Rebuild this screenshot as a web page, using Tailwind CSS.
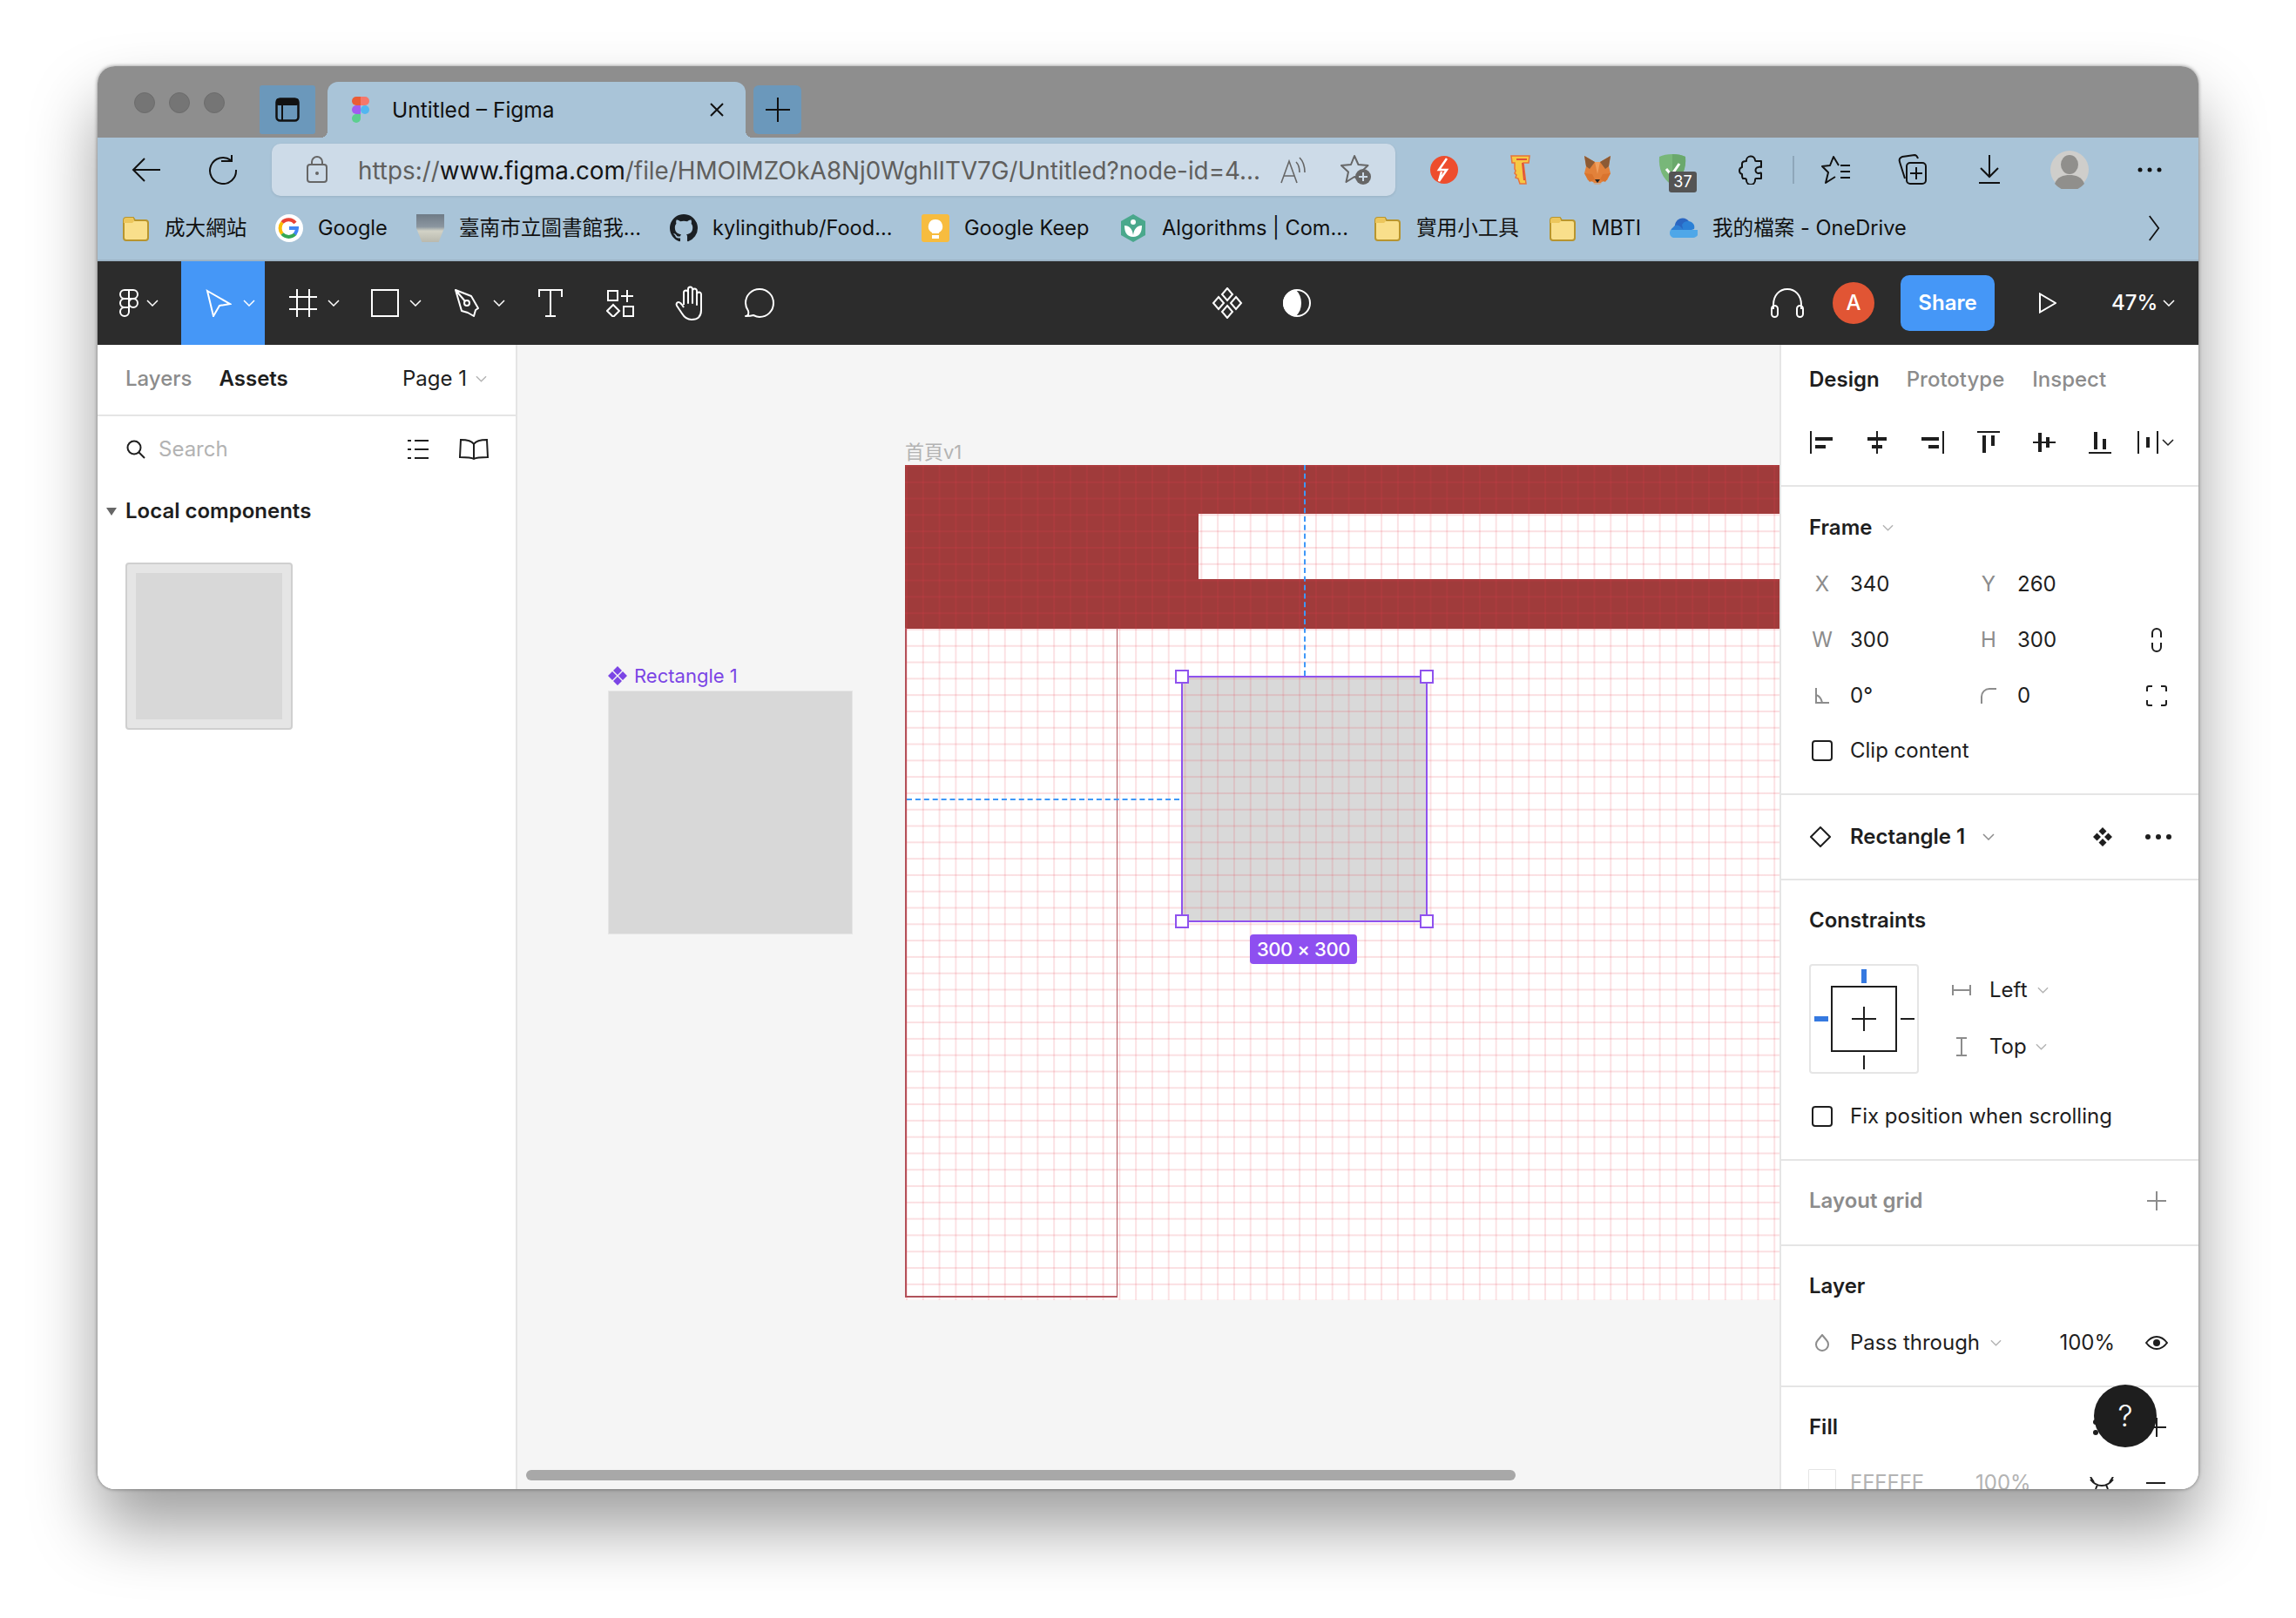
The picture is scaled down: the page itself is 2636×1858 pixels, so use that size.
<!doctype html>
<html><head><meta charset="utf-8">
<script src="https://cdn.jsdelivr.net/npm/@tailwindcss/browser@4"></script>
</head>
<body class="m-0 bg-white">
<div class="w-[2636px] h-[1858px] pt-[76px] pl-[112px] bg-white overflow-hidden font-['Inter','Noto_Sans_CJK_TC',sans-serif] text-[#1e1e1e] antialiased">
<div class="w-[2412px] h-[1634px] flex flex-col rounded-[20px] overflow-hidden shadow-[0_44px_76px_rgba(0,0,0,0.38),0_0_4px_rgba(0,0,0,0.45)]">

<!-- title bar -->
<div class="h-[82px] shrink-0 bg-[#8e8e8e] flex items-start">
  <div class="flex gap-[16px] mt-[30px] ml-[42px]">
    <div class="w-[24px] h-[24px] rounded-full bg-[#757575] border border-[#6c6c6c]"></div>
    <div class="w-[24px] h-[24px] rounded-full bg-[#757575] border border-[#6c6c6c]"></div>
    <div class="w-[24px] h-[24px] rounded-full bg-[#757575] border border-[#6c6c6c]"></div>
  </div>
  <div class="ml-[40px] mt-[22px] w-[64px] h-[56px] bg-[#6b98bb] rounded-[3px] flex items-center justify-center">
    <svg width="30" height="30" viewBox="0 0 30 30" fill="none"><rect x="2.5" y="2.5" width="25" height="25" rx="4" stroke="#111" stroke-width="2.5"/><rect x="2" y="2" width="26" height="8" rx="3" fill="#111"/><path d="M9 9v18" stroke="#111" stroke-width="2"/></svg>
  </div>
  <div class="relative ml-[14px] mt-[18px] w-[480px] h-[64px] bg-[#a9c4d8] rounded-t-[12px] flex items-center pl-[28px] pr-[25px]">
    <span class="absolute left-[-8px] bottom-0 w-[8px] h-[8px] bg-[radial-gradient(circle_at_0_0,transparent_8px,#a9c4d8_8px)]"></span>
    <span class="absolute right-[-8px] bottom-0 w-[8px] h-[8px] bg-[radial-gradient(circle_at_100%_0,transparent_8px,#a9c4d8_8px)]"></span>
    <svg width="20" height="30" viewBox="0 0 20 30"><path d="M10 0H5a5 5 0 0 0 0 10h5z" fill="#ea5c35"/><path d="M10 0h5a5 5 0 0 1 0 10h-5z" fill="#f5776a"/><path d="M10 10H5a5 5 0 0 0 0 10h5z" fill="#a25cf0"/><circle cx="15" cy="15" r="5" fill="#52b6f0"/><path d="M5 20h5v5a5 5 0 1 1-5-5z" fill="#5ccf8f"/></svg>
    <span class="ml-[26px] text-[24.500px] leading-none whitespace-nowrap text-[#111]">Untitled – Figma</span>
    <svg class="ml-auto" width="16" height="16" viewBox="0 0 16 16" fill="none"><path d="M1 1l14 14M15 1 1 15" stroke="#111" stroke-width="2"/></svg>
  </div>
  <div class="ml-[9px] mt-[22px] w-[55px] h-[56px] bg-[#6b98bb] rounded-[6px] flex items-center justify-center">
    <svg width="28" height="28" viewBox="0 0 28 28" fill="none"><path d="M14 0v28M0 14h28" stroke="#111" stroke-width="2"/></svg>
  </div>
</div>

<!-- browser toolbar + bookmarks -->
<div class="h-[142px] shrink-0 bg-[#a9c4d8] border-b-2 border-[#9cb3c5]">
  <div class="h-[74px] flex items-center">
    <div class="ml-[24px] w-[64px] flex justify-center">
      <svg width="34" height="30" viewBox="0 0 34 30" fill="none"><path d="M33 15H2M15 2 2 15l13 13" stroke="#111" stroke-width="2"/></svg>
    </div>
    <div class="ml-[24px] w-[64px] flex justify-center">
      <svg width="34" height="34" viewBox="0 0 34 34" fill="none"><path d="M26 6A15 15 0 1 0 32 17" stroke="#111" stroke-width="2"/><path d="M15 4h12V-3" transform="translate(0 3)" stroke="#111" stroke-width="2"/></svg>
    </div>
    <div class="ml-[24px] w-[1290px] h-[60px] bg-[#cddbe8] rounded-[10px] flex items-center pl-[36px] shadow-[0_1px_3px_rgba(0,0,0,0.1)]">
      <div class="w-[32px] flex justify-center">
        <svg width="26" height="32" viewBox="0 0 26 32" fill="none"><rect x="2" y="10" width="22" height="20" rx="3" stroke="#666" stroke-width="2"/><path d="M7 10V7a6 6 0 0 1 12 0v3" stroke="#666" stroke-width="2"/><circle cx="13" cy="20" r="2" fill="#666"/></svg>
      </div>
      <div class="ml-[31px] w-[1034px] pt-[2px] text-[27.800px] leading-[36px] whitespace-nowrap text-[#605f5d]">https://<span class="text-[#141414]">www.figma.com</span>/file/HMOlMZOkA8Nj0WghlITV7G/Untitled?node-id=4...</div>
      <div class="ml-[20px] w-[40px] flex justify-center">
        <svg width="32" height="32" viewBox="0 0 32 32" fill="none"><path d="M2 31 11 6l9 25M5 23h12" stroke="#666" stroke-width="1.6"/><path d="M19 7c3 3 4 7 4 12M23 2c4 4 6 10 6 17" stroke="#666" stroke-width="1.6"/></svg>
      </div>
      <div class="ml-[32px] w-[40px] flex justify-center">
        <svg width="36" height="36" viewBox="0 0 36 36" fill="none"><path d="M16 2l4.500 10 11 1-8 7.500 2.500 11L16 26l-9.500 6L9 20.500 1 13l11-1z" stroke="#666" stroke-width="2" stroke-linejoin="round"/><circle cx="26" cy="26" r="9" fill="#666"/><path d="M26 21v10M21 26h10" stroke="#cddbe8" stroke-width="2"/></svg>
      </div>
    </div>
    <div class="ml-[12px] w-[88px] flex justify-center">
      <svg width="32" height="32" viewBox="0 0 32 32"><ellipse cx="16" cy="16" rx="16" ry="16" fill="#ee4d2d"/><path d="M19 3 10 16h9l-9 13 3-11" fill="none" stroke="#fff" stroke-width="2.500"/></svg>
    </div>
    <div class="w-[88px] flex justify-center">
      <svg width="24" height="34" viewBox="0 0 24 34"><path d="M1 1h21l-1 8h-6l3 24h-7l-2-6-3-1 1-3-2-2 1-3-1-2V9H2z" fill="#f6c944" stroke="#e8733a" stroke-width="1.500"/><path d="M7 5h12M14 9l2 20" stroke="#e0503a" stroke-width="2" fill="none"/></svg>
    </div>
    <div class="w-[88px] flex justify-center">
      <svg width="32" height="34" viewBox="0 0 32 34"><path d="M1 1 13 8h6L31 1l-2 12 2 8-4 8-6 2-2 2h-6l-2-2-6-2-4-8 2-8z" fill="#e2813a"/><path d="M1 1l12 7-6 8-4-3zM31 1 19 8l6 8 4-3z" fill="#8c5a34"/><path d="M13 8h6l-3 14z" fill="#f0a060"/><path d="M1 21l9 1 3 6-6 3zM31 21l-9 1-3 6 6 3z" fill="#d9742e"/><path d="M13 28h6l-3 4z" fill="#222"/><path d="M11 32h10l-2 2h-6z" fill="#c0ad9e"/></svg>
    </div>
    <div class="w-[88px] flex justify-center">
      <div class="relative w-[36px] h-[36px]">
        <svg width="32" height="36" viewBox="0 0 32 36"><path d="M16 0c6 0 11 1 15 3 1 13-3 25-15 33C4 28 0 16 1 3 5 1 10 0 16 0z" fill="#78b779"/><path d="M16 0c6 0 11 1 15 3 1 13-3 25-15 33z" fill="#6aa86c"/><path d="M9 17l6 7 9-13" fill="none" stroke="#fff" stroke-width="3"/></svg>
        <span class="absolute left-[12px] top-[20px] w-[32px] h-[24px] bg-[#545454] rounded-[3px] text-white text-[18px] leading-[24px] text-center">37</span>
      </div>
    </div>
    <div class="w-[88px] flex justify-center">
      <svg width="30" height="34" viewBox="0 0 30 34" fill="none"><path d="M10 7a5 5 0 0 1 10-1c0 1 0 1 1 1h6v7c-1 0-2-1-3 0a3.500 3.500 0 0 0 0 7c1 0 3-1 3 0v6h-6c-1 0-1 1-1 2a5 5 0 0 1-10 0c0-1-1-2-2-2H6c-1-1-1-3-1-5-4-1-4-7 0-8V10c0-2 2-3 5-3z" stroke="#111" stroke-width="2" stroke-linejoin="round"/></svg>
    </div>
    <div class="ml-[4px] w-[2px] h-[32px] bg-[#8ea7ba]"></div>
    <div class="ml-[4px] w-[88px] flex justify-center">
      <svg width="34" height="32" viewBox="0 0 34 32" fill="none"><path d="M20 11 14 1 10 11 1 12l7 7-3 12 11-7M22 11h11M22 18h11M22 25h11" stroke="#111" stroke-width="2" stroke-linejoin="round"/></svg>
    </div>
    <div class="w-[88px] flex justify-center">
      <svg width="34" height="36" viewBox="0 0 34 36" fill="none"><path d="M8 28 2 9c-1-3 0-5 3-6l14-2c2 0 3 1 4 4" stroke="#111" stroke-width="2"/><rect x="10" y="10" width="22" height="24" rx="4" stroke="#111" stroke-width="2"/><path d="M21 15v14M14 22h14" stroke="#111" stroke-width="2"/></svg>
    </div>
    <div class="w-[88px] flex justify-center">
      <svg width="24" height="34" viewBox="0 0 24 34" fill="none"><path d="M12 0v25M2 15l10 10 10-10M0 32h24" stroke="#111" stroke-width="2"/></svg>
    </div>
    <div class="w-[96px] flex justify-center">
      <svg width="44" height="44" viewBox="0 0 44 44"><circle cx="22" cy="22" r="22" fill="#cfcecb"/><ellipse cx="22" cy="16" rx="10" ry="11" fill="#908f8c"/><path d="M5 38c3-8 10-10 17-10s14 2 17 10a22 22 0 0 1-34 0z" fill="#908f8c"/></svg>
    </div>
    <div class="w-[88px] flex justify-center">
      <svg width="28" height="6" viewBox="0 0 28 6"><circle cx="3" cy="3" r="2.500" fill="#111"/><circle cx="14" cy="3" r="2.500" fill="#111"/><circle cx="25" cy="3" r="2.500" fill="#111"/></svg>
    </div>
  </div>
  <div class="h-[60px] flex items-center pl-[28px] gap-[33px] text-[23.600px] leading-none text-[#111] whitespace-nowrap">
    <div class="flex items-center gap-[17px]">
      <svg width="32" height="30" viewBox="0 0 32 30"><path d="M2 6a3 3 0 0 1 3-3h8l2 3h12a3 3 0 0 1 3 3v17a3 3 0 0 1-3 3H5a3 3 0 0 1-3-3z" fill="#f9df8b" stroke="#b8952e" stroke-width="2"/><path d="M2 9V6a3 3 0 0 1 3-3h8l1 4-2 2z" fill="#ecc65c"/></svg>
      <span class="w-[94px]">成大網站</span>
    </div>
    <div class="flex items-center gap-[17px]">
      <svg width="32" height="32" viewBox="0 0 32 32" fill="none"><circle cx="16" cy="16" r="16" fill="#fff"/><path d="M23 10a10 10 0 0 0-15-.5" stroke="#ea4335" stroke-width="4"/><path d="M8 9.500a10 10 0 0 0 0 13" stroke="#fbbc05" stroke-width="4"/><path d="M8 22.500a10 10 0 0 0 15 0" stroke="#34a853" stroke-width="4"/><path d="M16 16h9c0 3-1 5-2.500 7" stroke="#4285f4" stroke-width="4"/></svg>
      <span class="w-[80px]">Google</span>
    </div>
    <div class="flex items-center gap-[17px]">
      <div class="w-[32px] h-[32px] bg-[linear-gradient(to_bottom,#6f7b86_0%,#8b96a0_45%,#d2d2c6_60%,#b9b9ae_100%)] [clip-path:polygon(0_0,100%_0,100%_50%,80%_100%,20%_100%,0_50%)]"></div>
      <span class="w-[209px]">臺南市立圖書館我...</span>
    </div>
    <div class="flex items-center gap-[17px]">
      <svg width="32" height="32" viewBox="0 0 16 16"><path fill="#1b1f23" d="M8 0C3.580 0 0 3.580 0 8c0 3.540 2.290 6.530 5.470 7.590.4.070.55-.17.55-.38 0-.19-.01-.82-.01-1.490-2.010.37-2.530-.49-2.690-.94-.09-.23-.48-.94-.82-1.130-.28-.15-.68-.52-.01-.53.63-.01 1.080.58 1.230.82.720 1.210 1.870.87 2.330.66.070-.52.280-.87.510-1.070-1.780-.2-3.640-.89-3.640-3.950 0-.87.310-1.590.820-2.150-.08-.2-.36-1.020.080-2.120 0 0 .67-.21 2.200.82.640-.18 1.320-.27 2-.27s1.360.09 2 .27c1.530-1.040 2.200-.82 2.200-.82.440 1.100.160 1.920.080 2.120.51.560.82 1.270.82 2.150 0 3.070-1.870 3.750-3.650 3.950.29.25.54.73.54 1.480 0 1.070-.01 1.930-.01 2.200 0 .21.150.46.550.38A8.010 8.010 0 0 0 16 8c0-4.420-3.580-8-8-8z"/></svg>
      <span class="w-[207px]">kylingithub/Food...</span>
    </div>
    <div class="flex items-center gap-[17px]">
      <svg width="32" height="32" viewBox="0 0 32 32"><rect width="32" height="32" rx="3" fill="#f7bc3f"/><path d="M16 6a8 8 0 0 1 4 15v1h-8v-1A8 8 0 0 1 16 6z" fill="#fff"/><rect x="12" y="24" width="8" height="4" fill="#fff"/></svg>
      <span class="w-[145px]">Google Keep</span>
    </div>
    <div class="flex items-center gap-[17px]">
      <svg width="32" height="32" viewBox="0 0 32 32"><path d="M16 0 30 8v16l-14 8-14-8V8z" fill="#4aa88c"/><circle cx="16" cy="9" r="3" fill="#fff"/><path d="M6 13c6 0 9 4 10 11 1-7 4-11 10-11 0 8-3 13-10 13S6 21 6 13z" fill="#fff"/></svg>
      <span class="w-[210px]">Algorithms | Com...</span>
    </div>
    <div class="flex items-center gap-[17px]">
      <svg width="32" height="30" viewBox="0 0 32 30"><path d="M2 6a3 3 0 0 1 3-3h8l2 3h12a3 3 0 0 1 3 3v17a3 3 0 0 1-3 3H5a3 3 0 0 1-3-3z" fill="#f9df8b" stroke="#b8952e" stroke-width="2"/><path d="M2 9V6a3 3 0 0 1 3-3h8l1 4-2 2z" fill="#ecc65c"/></svg>
      <span class="w-[119px]">實用小工具</span>
    </div>
    <div class="flex items-center gap-[17px]">
      <svg width="32" height="30" viewBox="0 0 32 30"><path d="M2 6a3 3 0 0 1 3-3h8l2 3h12a3 3 0 0 1 3 3v17a3 3 0 0 1-3 3H5a3 3 0 0 1-3-3z" fill="#f9df8b" stroke="#b8952e" stroke-width="2"/><path d="M2 9V6a3 3 0 0 1 3-3h8l1 4-2 2z" fill="#ecc65c"/></svg>
      <span class="w-[57px]">MBTI</span>
    </div>
    <div class="flex items-center gap-[17px]">
      <svg width="32" height="32" viewBox="0 0 32 32"><path d="M6 15a9 9 0 0 1 16-7l-6 11z" fill="#2a66c2"/><path d="M14 12a8 8 0 0 1 8-4 7 7 0 0 1 6 9l-12 4z" fill="#2b80d6"/><path d="M4 15a5 5 0 0 1 8-1l12 12H6a6 6 0 0 1-2-11z" fill="#2f7fd3"/><path d="M4 27a6 6 0 0 1-4-6 6 6 0 0 1 1-3l15 0 16 0a6 6 0 0 1-5 9z" fill="#4fa7e8"/></svg>
      <span class="w-[225px]">我的檔案 - OneDrive</span>
    </div>
    <svg class="ml-[242px]" width="14" height="30" viewBox="0 0 16 34" fill="none"><path d="M2 1l12 16L2 33" stroke="#111" stroke-width="2"/></svg>
  </div>
</div>

<!-- figma toolbar -->
<div class="h-[96px] shrink-0 bg-[#2c2c2c] flex items-center text-white">
  <div class="w-[96px] h-full flex items-center pl-[24px]">
    <svg width="24" height="32" viewBox="0 0 24 32" fill="none" stroke="#fff" stroke-width="2"><path d="M12 1H7a5 5 0 0 0 0 10h5zM12 1h5a5 5 0 0 1 0 10h-5zM12 11H7a5 5 0 0 0 0 10h5z"/><circle cx="17" cy="16" r="5"/><path d="M7 21h5v5a5 5 0 1 1-5-5z"/></svg>
    <svg class="ml-[8px]" width="14" height="8" viewBox="0 0 14 8" fill="none"><path d="M1 1l6 6 6-6" stroke="#fff" stroke-width="1.500"/></svg>
  </div>
  <div class="w-[96px] h-full bg-[#4597f7] flex items-center pl-[28px]">
    <svg width="30" height="32" viewBox="0 0 30 32" fill="none"><path d="M2 2l26 15-12 2-7 12z" stroke="#fff" stroke-width="2" stroke-linejoin="miter"/></svg>
    <svg class="ml-[13px]" width="14" height="8" viewBox="0 0 14 8" fill="none"><path d="M1 1l6 6 6-6" stroke="#fff" stroke-width="1.500"/></svg>
  </div>
  <div class="w-[96px] h-full flex items-center pl-[28px]">
    <svg width="32" height="32" viewBox="0 0 32 32" fill="none"><path d="M9 0v32M23 0v32M0 9h32M0 23h32" stroke="#fff" stroke-width="2"/></svg>
    <svg class="ml-[12px]" width="14" height="8" viewBox="0 0 14 8" fill="none"><path d="M1 1l6 6 6-6" stroke="#fff" stroke-width="1.500"/></svg>
  </div>
  <div class="w-[96px] h-full flex items-center pl-[26px]">
    <svg width="32" height="32" viewBox="0 0 32 32" fill="none"><rect x="1" y="1" width="30" height="30" stroke="#fff" stroke-width="2"/></svg>
    <svg class="ml-[12px]" width="14" height="8" viewBox="0 0 14 8" fill="none"><path d="M1 1l6 6 6-6" stroke="#fff" stroke-width="1.500"/></svg>
  </div>
  <div class="w-[96px] h-full flex items-center pl-[25px]">
    <svg width="32" height="32" viewBox="0 0 32 32" fill="none"><path d="M2 1l18 7 8 14-3 2-2 7-7-4-7-2zM2 1l11 13" stroke="#fff" stroke-width="2" stroke-linejoin="round"/><circle cx="15" cy="16" r="3" stroke="#fff" stroke-width="2"/></svg>
    <svg class="ml-[13px]" width="14" height="8" viewBox="0 0 14 8" fill="none"><path d="M1 1l6 6 6-6" stroke="#fff" stroke-width="1.500"/></svg>
  </div>
  <div class="w-[80px] h-full flex items-center justify-center">
    <svg width="28" height="32" viewBox="0 0 28 32" fill="none"><path d="M1 9V1h26v8M14 1v30M8 31h12" stroke="#fff" stroke-width="2"/></svg>
  </div>
  <div class="w-[80px] h-full flex items-center justify-center">
    <svg width="32" height="32" viewBox="0 0 32 32" fill="none" stroke="#fff" stroke-width="2"><rect x="2" y="2" width="11" height="11"/><path d="M24 1v14M17 8h14"/><path d="M8 18l7 7-7 7-7-7z"/><rect x="20" y="20" width="11" height="11"/></svg>
  </div>
  <div class="w-[80px] h-full flex items-center justify-center">
    <svg width="36" height="40" viewBox="0 0 36 40" fill="none"><path d="M11 22V8a2.500 2.500 0 0 1 5 0v12V4a2.500 2.500 0 0 1 5 0v16V6a2.500 2.500 0 0 1 5 0v16-12a2.500 2.500 0 0 1 5 0v18c0 7-4 11-11 11-5 0-8-2-11-7l-6-9c-1-2 0-4 2-4 1 0 3 1 6 6" stroke="#fff" stroke-width="2" stroke-linejoin="round"/></svg>
  </div>
  <div class="w-[80px] h-full flex items-center justify-center">
    <svg width="36" height="34" viewBox="0 0 36 34" fill="none"><path d="M2 32c3 0 4-3 3-6-2-3-3-6-3-9C2 8 9 1 18 1s16 7 16 16-7 16-16 16c-3 0-5-1-7-2-3 1-6 1-9 1z" stroke="#fff" stroke-width="2" stroke-linejoin="round"/></svg>
  </div>
  <div class="ml-[457px] w-[80px] h-full flex items-center justify-center">
    <svg width="36" height="36" viewBox="0 0 36 36" fill="none" stroke="#fff" stroke-width="2"><path d="M18 1l6 7-6 7-6-7zM18 21l6 7-6 7-6-7zM8 11l6 7-6 7-6-7zM28 11l6 7-6 7-6-7z"/></svg>
  </div>
  <div class="w-[80px] h-full flex items-center justify-center">
    <svg width="32" height="32" viewBox="0 0 32 32"><circle cx="16" cy="16" r="15" fill="none" stroke="#fff" stroke-width="2"/><path d="M16 1a15 15 0 0 0 0 30c4-4 6-9 6-15S20 5 16 1z" fill="#fff" transform="translate(-1 0)"/></svg>
  </div>
  <div class="ml-[499px] w-[48px] flex justify-center">
    <svg width="38" height="34" viewBox="0 0 38 34" fill="none" stroke="#fff" stroke-width="2"><path d="M3 24V19C3 8 10 1 19 1s16 7 16 18v5"/><rect x="1" y="20" width="7" height="13" rx="3.500"/><rect x="30" y="20" width="7" height="13" rx="3.500"/></svg>
  </div>
  <div class="ml-[28px] w-[48px] h-[48px] rounded-full bg-[#e15534] flex items-center justify-center text-[24px] leading-none font-medium">A</div>
  <div class="ml-[30px] w-[108px] h-[64px] rounded-[10px] bg-[#4597f7] flex items-center justify-center text-[24px] leading-none font-semibold">Share</div>
  <div class="ml-[49px] w-[24px] flex justify-center">
    <svg width="20" height="24" viewBox="0 0 20 24" fill="none"><path d="M1 1.500v21L19 12z" stroke="#fff" stroke-width="2"/></svg>
  </div>
  <span class="ml-[61px] text-[24px] leading-none font-medium w-[47px] whitespace-nowrap">47%</span>
  <svg class="ml-[12px]" width="14" height="8" viewBox="0 0 14 8" fill="none"><path d="M1 1l6 6 6-6" stroke="#fff" stroke-width="1.500"/></svg>
</div>

<!-- main -->
<div class="flex-1 min-h-0 flex">
  <!-- left -->
  <div class="w-[482px] shrink-0 bg-white border-r-2 border-[#e5e5e5] text-[24px] leading-none">
    <div class="h-[82px] border-b-2 border-[#e5e5e5] flex items-center pl-[32px] pb-[2px]">
      <span class="text-[#8c8c8c] font-medium">Layers</span>
      <span class="ml-[31px] font-semibold">Assets</span>
      <span class="ml-auto">Page 1</span>
      <svg class="ml-[10px] mr-[33px]" width="13" height="8" viewBox="0 0 14 8" fill="none"><path d="M1 1l6 6 6-6" stroke="#b3b3b3" stroke-width="1.500"/></svg>
    </div>
    <div class="h-[76px] flex items-center pl-[33px]">
      <svg width="22" height="22" viewBox="0 0 22 22" fill="none"><circle cx="9" cy="9" r="7.500" stroke="#1e1e1e" stroke-width="2"/><path d="M14 14l7 7" stroke="#1e1e1e" stroke-width="2"/></svg>
      <span class="ml-[15px] text-[#b3b3b3]">Search</span>
      <svg class="ml-auto" width="24" height="24" viewBox="0 0 24 24" fill="none" stroke="#1e1e1e" stroke-width="2"><path d="M0 2h4M8 2h16M0 12h4M8 12h16M0 22h4M8 22h16"/></svg>
      <svg class="ml-[35px] mr-[31px]" width="34" height="24" viewBox="0 0 34 24" fill="none" stroke="#1e1e1e" stroke-width="2"><path d="M17 6c-2-3-6-5-15-5L1 21c8 0 13 0 16 2 3-2 8-2 16-2L32 1c-9 0-13 2-15 5zM17 6v17"/></svg>
    </div>
    <div class="h-[66px] flex items-center pl-[10px] font-semibold">
      <svg width="12" height="9" viewBox="0 0 12 9"><path d="M0 0h12L6 9z" fill="#666"/></svg>
      <span class="ml-[10px]">Local components</span>
    </div>
    <div class="ml-[32px] mt-[26px] w-[192px] h-[192px] bg-[#e5e5e5] border-2 border-[#cfcfcf] rounded-[4px] flex items-center justify-center">
      <div class="w-[168px] h-[168px] bg-[#d8d8d8]"></div>
    </div>
  </div>

  <!-- canvas -->
  <div class="flex-1 min-w-0 relative bg-[#f5f5f5] overflow-hidden">
    <div class="absolute left-[104px] top-[368px] flex items-center text-[22px] leading-[24px] text-[#7b45e5]">
      <svg width="22" height="22" viewBox="0 0 22 22" fill="#7b45e5"><path d="M11 0l5 5-5 5-5-5zM11 12l5 5-5 5-5-5zM5 6l5 5-5 5-5-5zM17 6l5 5-5 5-5-5z"/></svg>
      <span class="ml-[8px]">Rectangle 1</span>
    </div>
    <div class="absolute left-[104px] top-[397px] w-[281px] h-[280px] bg-[#d8d8d8] border border-[#e6e6e6]"></div>
    <div class="absolute left-[445px] top-[111px] text-[22px] leading-[24px] text-[#b3b3b3]">首頁v1</div>

    <div class="absolute left-[445px] top-[138px] w-[1004px] h-[959px] bg-white">
      <div class="h-[188px] bg-[#a03b3b] relative">
        <div class="absolute left-[337px] right-0 top-[56px] h-[75px] bg-white"></div>
      </div>
      <div class="absolute left-0 top-[187px] w-[244px] h-[769px] border-l-2 border-r border-b-2 border-[#b0525a]"></div>
      <div class="absolute left-[317px] top-[242px] w-[283px] h-[283px] bg-[#d9d9d9]"></div>
      <div class="absolute inset-0 bg-[linear-gradient(to_right,rgba(230,60,75,0.15)_2px,transparent_2px),linear-gradient(to_bottom,rgba(230,60,75,0.16)_2px,transparent_2px)] bg-[size:18.8px_18.8px] bg-[position:1px_0]"></div>
      <div class="absolute left-[458px] top-0 h-[242px] border-l-2 border-dashed border-[#3f98f8]"></div>
      <div class="absolute left-[2px] top-[383px] w-[313px] border-t-2 border-dashed border-[#3f98f8]"></div>
      <div class="absolute left-[317px] top-[242px] w-[283px] h-[283px] border-2 border-[#8f52ee]"></div>
      <div class="absolute left-[310px] top-[235px] w-[16px] h-[16px] bg-white border-2 border-[#8f52ee]"></div>
      <div class="absolute left-[591px] top-[235px] w-[16px] h-[16px] bg-white border-2 border-[#8f52ee]"></div>
      <div class="absolute left-[310px] top-[516px] w-[16px] h-[16px] bg-white border-2 border-[#8f52ee]"></div>
      <div class="absolute left-[591px] top-[516px] w-[16px] h-[16px] bg-white border-2 border-[#8f52ee]"></div>
      <div class="absolute left-[396px] top-[539px] w-[123px] h-[34px] bg-[#8e4ff0] rounded-[4px] text-white text-[22px] tracking-[-0.4px] leading-[34px] text-center font-medium whitespace-nowrap">300 × 300</div>
    </div>

    <div class="absolute left-[10px] top-[1292px] w-[1136px] h-[12px] rounded-full bg-[#a8a8a8]"></div>
  </div>

  <!-- right -->
  <div class="w-[481px] shrink-0 relative overflow-hidden bg-white border-l-2 border-[#e5e5e5] text-[24px] leading-none">
    <div class="h-[163px] border-b-2 border-[#e5e5e5]">
      <div class="h-[80px] flex items-center pl-[32px]">
        <span class="font-semibold">Design</span>
        <span class="ml-[31px] text-[#8c8c8c] font-medium">Prototype</span>
        <span class="ml-[32px] text-[#8c8c8c] font-medium">Inspect</span>
      </div>
      <div class="h-[64px] flex pl-[14px]">
        <div class="w-[64px] flex items-center justify-center"><svg width="28" height="28" viewBox="0 0 28 28" fill="#1e1e1e"><rect x="1" y="1" width="2" height="26"/><rect x="7" y="8" width="20" height="4"/><rect x="7" y="17" width="12" height="4"/></svg></div>
        <div class="w-[64px] flex items-center justify-center"><svg width="28" height="28" viewBox="0 0 28 28" fill="#1e1e1e"><rect x="13" y="1" width="2" height="26"/><rect x="3" y="8" width="22" height="4"/><rect x="8" y="17" width="12" height="4"/></svg></div>
        <div class="w-[64px] flex items-center justify-center"><svg width="28" height="28" viewBox="0 0 28 28" fill="#1e1e1e"><rect x="25" y="1" width="2" height="26"/><rect x="1" y="8" width="20" height="4"/><rect x="9" y="17" width="12" height="4"/></svg></div>
        <div class="w-[64px] flex items-center justify-center"><svg width="28" height="28" viewBox="0 0 28 28" fill="#1e1e1e"><rect x="1" y="1" width="26" height="2"/><rect x="7" y="6" width="4" height="20"/><rect x="17" y="6" width="4" height="12"/></svg></div>
        <div class="w-[64px] flex items-center justify-center"><svg width="28" height="28" viewBox="0 0 28 28" fill="#1e1e1e"><rect x="1" y="13" width="26" height="2"/><rect x="7" y="3" width="4" height="22"/><rect x="16" y="8" width="4" height="12"/></svg></div>
        <div class="w-[64px] flex items-center justify-center"><svg width="28" height="28" viewBox="0 0 28 28" fill="#1e1e1e"><rect x="1" y="25" width="26" height="2"/><rect x="7" y="2" width="4" height="20"/><rect x="17" y="10" width="4" height="12"/></svg></div>
        <div class="w-[64px] flex items-center justify-center"><svg width="44" height="28" viewBox="0 0 44 28" fill="none"><rect x="1" y="1" width="2" height="26" fill="#1e1e1e"/><rect x="11" y="8" width="4" height="12" fill="#1e1e1e"/><rect x="23" y="1" width="2" height="26" fill="#1e1e1e"/><path d="M30 11l6 6 6-6" stroke="#1e1e1e" stroke-width="1.500"/></svg></div>
      </div>
    </div>
    <div class="h-[354px] border-b-2 border-[#e5e5e5] pt-[15px]">
      <div class="h-[64px] flex items-center pl-[32px]">
        <span class="font-semibold">Frame</span>
        <svg class="ml-[12px]" width="13" height="8" viewBox="0 0 14 8" fill="none"><path d="M1 1l6 6 6-6" stroke="#b3b3b3" stroke-width="1.500"/></svg>
      </div>
      <div class="h-[64px] flex items-center pl-[24px] pt-[1px]">
        <span class="w-[46px] text-center text-[#8c8c8c]">X</span><span class="ml-[9px] w-[136px]">340</span>
        <span class="w-[46px] text-center text-[#8c8c8c]">Y</span><span class="ml-[10px]">260</span>
      </div>
      <div class="h-[64px] flex items-center pl-[24px] pt-[1px]">
        <span class="w-[46px] text-center text-[#8c8c8c]">W</span><span class="ml-[9px] w-[136px]">300</span>
        <span class="w-[46px] text-center text-[#8c8c8c]">H</span><span class="ml-[10px] w-[131px]">300</span>
        <div class="w-[58px] flex justify-center"><svg width="12" height="28" viewBox="0 0 12 28" fill="none" stroke="#1e1e1e" stroke-width="2"><path d="M1 11V6a5 5 0 0 1 10 0v5M1 17v5a5 5 0 0 0 10 0v-5"/></svg></div>
      </div>
      <div class="h-[64px] flex items-center pl-[24px] pt-[1px]">
        <div class="w-[46px] flex justify-center"><svg width="16" height="18" viewBox="0 0 16 18" fill="none" stroke="#8c8c8c" stroke-width="2"><path d="M1 0v17h15M1 8c4 1 6 4 7 9"/></svg></div><span class="ml-[9px] w-[136px]">0°</span>
        <div class="w-[46px] flex justify-center"><svg width="18" height="18" viewBox="0 0 18 18" fill="none" stroke="#8c8c8c" stroke-width="2"><path d="M1 18V10a9 9 0 0 1 9-9h8"/></svg></div><span class="ml-[10px] w-[131px]">0</span>
        <div class="w-[58px] flex justify-center"><svg width="24" height="24" viewBox="0 0 24 24" fill="none" stroke="#1e1e1e" stroke-width="2"><path d="M1 7V3a2 2 0 0 1 2-2h4M17 1h4a2 2 0 0 1 2 2v4M23 17v4a2 2 0 0 1-2 2h-4M7 23H3a2 2 0 0 1-2-2v-4"/></svg></div>
      </div>
      <div class="h-[64px] flex items-center pl-[32px]">
        <div class="w-[24px] h-[24px] ml-[3px] border-2 border-[#1e1e1e] rounded-[4px]"></div><span class="ml-[20px]">Clip content</span>
      </div>
    </div>
    <div class="h-[98px] border-b-2 border-[#e5e5e5] flex items-center pl-[33px]">
      <svg width="24" height="24" viewBox="0 0 24 24" fill="none" stroke="#1e1e1e" stroke-width="2"><path d="M12 1l11 11-11 11L1 12z"/></svg>
      <span class="ml-[22px] font-semibold w-[142px] whitespace-nowrap">Rectangle 1</span>
      <svg class="ml-[10px]" width="14" height="8" viewBox="0 0 14 8" fill="none"><path d="M1 1l6 6 6-6" stroke="#8c8c8c" stroke-width="1.500"/></svg>
      <svg class="ml-[113px]" width="22" height="22" viewBox="0 0 22 22" fill="#1e1e1e"><path d="M11 0l4.500 4.500L11 9 6.500 4.500zM11 13l4.500 4.500L11 22l-4.500-4.500zM4.500 6.500 9 11l-4.500 4.500L0 11zM17.500 6.500 22 11l-4.500 4.500L13 11z"/></svg>
      <svg class="ml-[38px]" width="30" height="6" viewBox="0 0 30 6" fill="#1e1e1e"><circle cx="3" cy="3" r="3"/><circle cx="15" cy="3" r="3"/><circle cx="27" cy="3" r="3"/></svg>
    </div>
    <div class="h-[322px] border-b-2 border-[#e5e5e5] pt-[14px]">
      <div class="h-[64px] flex items-center pl-[32px] font-semibold">Constraints</div>
      <div class="mt-[18px] ml-[32px] h-[126px] flex">
        <svg width="126" height="126" viewBox="0 0 126 126" fill="none">
          <rect x="1" y="1" width="124" height="124" rx="3" stroke="#e5e5e5" stroke-width="2"/>
          <rect x="26" y="26" width="74" height="74" stroke="#1e1e1e" stroke-width="2"/>
          <path d="M63 49v28M49 63h28" stroke="#1e1e1e" stroke-width="2"/>
          <rect x="60" y="6" width="6" height="16" fill="#3579e0"/><rect x="6" y="60" width="16" height="6" fill="#3579e0"/>
          <path d="M105 63h16M63 105v16" stroke="#1e1e1e" stroke-width="2"/>
        </svg>
        <div class="ml-[38px] flex flex-col">
          <div class="h-[60px] flex items-center">
            <svg width="22" height="12" viewBox="0 0 22 12" fill="none" stroke="#8c8c8c" stroke-width="2"><path d="M1 0v12M21 0v12M1 6h20"/></svg>
            <span class="ml-[21px]">Left</span>
            <svg class="ml-[12px]" width="13" height="8" viewBox="0 0 14 8" fill="none"><path d="M1 1l6 6 6-6" stroke="#b3b3b3" stroke-width="1.500"/></svg>
          </div>
          <div class="mt-[4px] h-[62px] flex items-center">
            <svg class="ml-[5px] mr-[5px]" width="12" height="22" viewBox="0 0 12 22" fill="none" stroke="#8c8c8c" stroke-width="2"><path d="M0 1h12M0 21h12M6 1v20"/></svg>
            <span class="ml-[21px]">Top</span>
            <svg class="ml-[10px]" width="13" height="8" viewBox="0 0 14 8" fill="none"><path d="M1 1l6 6 6-6" stroke="#b3b3b3" stroke-width="1.500"/></svg>
          </div>
        </div>
      </div>
      <div class="mt-[17px] h-[64px] flex items-center pl-[32px]">
        <div class="w-[24px] h-[24px] ml-[3px] border-2 border-[#1e1e1e] rounded-[4px]"></div><span class="ml-[20px]">Fix position when scrolling</span>
      </div>
    </div>
    <div class="h-[98px] border-b-2 border-[#e5e5e5] flex items-center pl-[32px] pb-[4px] text-[#8c8c8c] font-semibold">
      <span>Layout grid</span>
      <svg class="ml-auto mr-[37px]" width="22" height="22" viewBox="0 0 22 22" fill="none" stroke="#8c8c8c" stroke-width="2"><path d="M11 0v22M0 11h22"/></svg>
    </div>
    <div class="h-[162px] border-b-2 border-[#e5e5e5] pt-[14px]">
      <div class="h-[64px] flex items-center pl-[32px] font-semibold">Layer</div>
      <div class="mt-[1px] h-[64px] flex items-center pl-[24px]">
        <div class="w-[46px] flex justify-center"><svg width="16" height="20" viewBox="0 0 16 20" fill="none" stroke="#8c8c8c" stroke-width="2"><path d="M8 1l5 6a7 7 0 1 1-10 0z"/></svg></div>
        <span class="ml-[9px] whitespace-nowrap">Pass through</span>
        <svg class="ml-[12px]" width="13" height="8" viewBox="0 0 14 8" fill="none"><path d="M1 1l6 6 6-6" stroke="#b3b3b3" stroke-width="1.500"/></svg>
        <span class="ml-auto">100%</span>
        <svg class="ml-[35px] mr-[35px]" width="26" height="16" viewBox="0 0 26 16" fill="none"><path d="M1 8c3-4 7-7 12-7s9 3 12 7c-3 4-7 7-12 7S4 12 1 8z" stroke="#1e1e1e" stroke-width="2"/><circle cx="13" cy="8" r="4" fill="#1e1e1e"/></svg>
      </div>
    </div>
    <div class="pt-[14px]">
      <div class="h-[64px] flex items-center pl-[32px] font-semibold relative">
        <span>Fill</span>
        <svg class="absolute left-[358px] top-[23px]" width="20" height="18" viewBox="0 0 20 18" fill="#1e1e1e"><circle cx="3" cy="3" r="3"/><circle cx="3" cy="15" r="3"/><circle cx="17" cy="3" r="3"/><circle cx="17" cy="15" r="3"/></svg>
        <svg class="ml-auto mr-[37px]" width="22" height="22" viewBox="0 0 22 22" fill="none" stroke="#1e1e1e" stroke-width="2"><path d="M11 0v22M0 11h22"/></svg>
      </div>
      <div class="h-[64px] flex items-center pl-[31px]">
        <div class="w-[32px] h-[32px] bg-white border border-[#e5e5e5] rounded-[1px]"></div>
        <span class="ml-[16px] w-[144px] text-[#b3b3b3]">FFFFFF</span>
        <span class="text-[#b3b3b3] w-[131px]">100%</span>
        <svg width="28" height="14" viewBox="0 0 28 14" fill="none" stroke="#1e1e1e" stroke-width="2"><path d="M1 3c4 5 8 7 13 7s9-2 13-7M1 0l4 6M27 0l-4 6M9 9l-2 5M19 9l2 5"/></svg>
        <svg class="ml-[37px]" width="22" height="2" viewBox="0 0 22 2"><rect width="22" height="2" fill="#1e1e1e"/></svg>
      </div>
    </div>
    <div class="absolute left-[359px] top-[1194px] w-[72px] h-[72px] rounded-full bg-[#1e1e1e] flex items-center justify-center text-white text-[34px] leading-none font-light">?</div>
  </div>
</div>
</div>
</div>
</body></html>
